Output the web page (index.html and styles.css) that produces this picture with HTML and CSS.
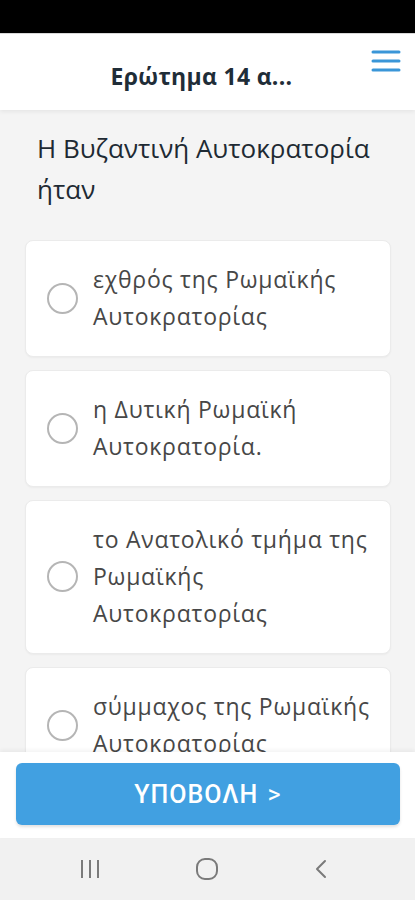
FILE: index.html
```html
<!DOCTYPE html>
<html lang="el">
<head>
<meta charset="utf-8">
<title>Ερώτημα 14</title>
<link rel="stylesheet" href="styles.css">
</head>
<body>
<div class="screen">
  <div class="statusbar"></div>
  <header class="topbar">
    <h1 class="title">Ερώτημα 14 α...</h1>
    <button class="menu" aria-label="Μενού">
      <svg width="30" height="24" viewBox="0 0 30 24"><g stroke="#3a96d8" stroke-width="3" stroke-linecap="round"><line x1="2" y1="3" x2="28" y2="3"/><line x1="2" y1="12" x2="28" y2="12"/><line x1="2" y1="21" x2="28" y2="21"/></g></svg>
    </button>
  </header>
  <main class="content">
    <p class="question">Η Βυζαντινή Αυτοκρατορία ήταν</p>
    <ul class="options">
      <li class="option"><span class="radio"></span><span class="label">εχθρός της Ρωμαϊκής Αυτοκρατορίας</span></li>
      <li class="option"><span class="radio"></span><span class="label">η Δυτική Ρωμαϊκή Αυτοκρατορία.</span></li>
      <li class="option"><span class="radio"></span><span class="label">το Ανατολικό τμήμα της Ρωμαϊκής Αυτοκρατορίας</span></li>
      <li class="option"><span class="radio"></span><span class="label">σύμμαχος της Ρωμαϊκής Αυτοκρατορίας</span></li>
    </ul>
  </main>
  <footer class="footer">
    <button class="submit">ΥΠΟΒΟΛΗ <span class="chev">&gt;</span></button>
  </footer>
  <nav class="navbar">
    <svg class="nav-icon" width="22" height="22" viewBox="0 0 22 22"><g stroke="#7a7a7a" stroke-width="2"><line x1="3" y1="2" x2="3" y2="20"/><line x1="11" y1="2" x2="11" y2="20"/><line x1="19" y1="2" x2="19" y2="20"/></g></svg>
    <svg class="nav-icon" width="24" height="24" viewBox="0 0 24 24"><rect x="2" y="2" width="20" height="20" rx="8" fill="none" stroke="#7a7a7a" stroke-width="2"/></svg>
    <svg class="nav-icon" width="16" height="24" viewBox="0 0 16 24"><polyline points="12,4 4,12 12,20" fill="none" stroke="#7a7a7a" stroke-width="2" stroke-linecap="round" stroke-linejoin="round"/></svg>
  </nav>
</div>
</body>
</html>
```

FILE: styles.css
```css
* { box-sizing: border-box; }
html, body { margin: 0; padding: 0; }
body { background: #f4f4f4; font-family: "Open Sans", "Noto Sans", sans-serif; }

.screen {
  width: 415px;
  height: 900px;
  display: flex;
  flex-direction: column;
  overflow: hidden;
  background: #f4f4f4;
}

.statusbar {
  height: 33px;
  flex: none;
  background: #000;
}

.topbar {
  height: 77px;
  flex: none;
  background: #fff;
  border-top: 1px solid #d8d8d8;
  display: flex;
  align-items: center;
  justify-content: center;
  padding-right: 12px;
  position: relative;
  box-shadow: 0 2px 4px rgba(0,0,0,0.06);
  z-index: 2;
}

.title {
  margin: 0;
  font-size: 23px;
  font-weight: 700;
  color: #1f2d38;
  letter-spacing: 0.3px;
  transform: translateY(4px);
}

.menu {
  position: absolute;
  right: 14px;
  top: 15px;
  padding: 0;
  border: 0;
  background: none;
  display: flex;
}

.content {
  flex: 1;
  overflow: hidden;
  padding: 18px 24px 0 25px;
}

.question {
  margin: 0 0 30px;
  padding: 0 12px;
  font-size: 26px;
  line-height: 41px;
  color: #1e2a33;
}

.options {
  list-style: none;
  margin: 0;
  padding: 0;
  display: flex;
  flex-direction: column;
  gap: 13px;
}

.option {
  background: #fff;
  border: 1px solid #ebebeb;
  border-radius: 8px;
  box-shadow: 0 1px 2px rgba(0,0,0,0.04);
  padding: 20px 12px 21px 21px;
  display: flex;
  align-items: center;
  gap: 15px;
}

.radio {
  flex: none;
  width: 31px;
  height: 31px;
  border-radius: 50%;
  border: 2px solid #b5b5b5;
}

.label {
  font-size: 23px;
  line-height: 37px;
  color: #474747;
  letter-spacing: 0.75px;
}

.footer {
  height: 86px;
  flex: none;
  background: #fff;
  padding: 11px 15px 13px 16px;
  box-shadow: 0 -2px 4px rgba(0,0,0,0.05);
  z-index: 2;
}

.submit {
  width: 100%;
  height: 62px;
  border: 0;
  border-radius: 6px;
  background: #41a0e1;
  color: #fff;
  font-family: Roboto, "Noto Sans", sans-serif;
  font-size: 25px;
  font-weight: 500;
  letter-spacing: 1px;
  box-shadow: 0 2px 3px rgba(0,0,0,0.12);
}

.chev { margin-left: 2px; font-weight: 400; }

.navbar {
  height: 62px;
  flex: none;
  background: #f1f1f1;
  display: flex;
  align-items: center;
  justify-content: space-between;
  padding: 0 86px 0 79px;
}
```
